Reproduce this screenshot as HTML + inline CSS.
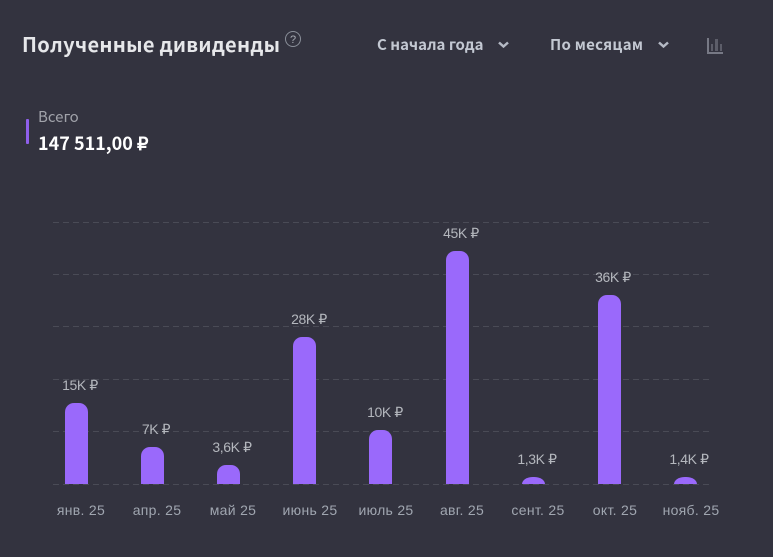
<!DOCTYPE html>
<html lang="ru">
<head>
<meta charset="utf-8">
<style>
html,body{margin:0;padding:0;width:773px;height:557px;overflow:hidden;background:#33333f;}
body{position:relative;font-family:"Liberation Sans",sans-serif;}
.n{position:absolute;font-family:"Noto Sans CJK JP","Liberation Sans",sans-serif;white-space:nowrap;line-height:1;}
.t{position:absolute;white-space:nowrap;font-size:14px;line-height:16px;color:#b4b7bd;transform:translateX(-50%);letter-spacing:-.4px;}
.x{color:#a0a6b0;letter-spacing:.3px;}
.b{position:absolute;width:23px;background:#9a69fb;border-radius:9px 9px 0 0;}
svg{position:absolute;left:0;top:0;}
</style>
</head>
<body>
<div class="n" style="left:22px;top:34px;font-size:20px;font-weight:700;color:#e6e7ea;letter-spacing:.3px">Полученные дивиденды</div>
<svg width="773" height="557">
<circle cx="293" cy="39" r="7.500" fill="none" stroke="#8a8f99" stroke-width="1"/>
<text x="293" y="43" font-size="11" fill="#a8acb4" text-anchor="middle" font-family="Liberation Sans">?</text>
<path d="M499 42.500l4.500 4 4.500-4M659 42.500l4.500 4 4.500-4" fill="none" stroke="#b4b9c4" stroke-width="2.500"/>
<path d="M708 38v15h15" fill="none" stroke="#777985" stroke-width="2"/>
<rect x="711" y="44" width="2" height="7" fill="#5c5d69"/>
<rect x="715" y="39" width="3" height="12" fill="#5c5d69"/>
<rect x="720" y="44" width="2" height="7" fill="#5c5d69"/>
<g stroke="#4a4b56" stroke-width="1" stroke-dasharray="6 4">
<path d="M53 222.500H709M53 274.500H709M53 326.500H709M53 379.500H709M53 431.500H709M53 484.500H709"/>
</g>
</svg>
<div class="n" style="left:377px;top:37px;font-size:15px;font-weight:700;color:#c3c8d2">С начала года</div>
<div class="n" style="left:550px;top:37px;font-size:15px;font-weight:700;color:#c3c8d2;letter-spacing:.25px">По месяцам</div>
<div style="position:absolute;left:26px;top:119px;width:3px;height:25px;background:#8f5fec;border-radius:1px"></div>
<div class="n" style="left:38px;top:109px;font-size:15px;color:#a1a3aa">Всего</div>
<div class="n" style="left:38px;top:134px;font-size:18px;font-weight:700;color:#fff">147 511,00 ₽</div>

<div class="b" style="left:65px;top:403px;height:81px"></div>
<div class="b" style="left:141px;top:447px;height:37px"></div>
<div class="b" style="left:217px;top:465px;height:19px"></div>
<div class="b" style="left:293px;top:337px;height:147px"></div>
<div class="b" style="left:369px;top:430px;height:54px"></div>
<div class="b" style="left:446px;top:251px;height:233px"></div>
<div class="b" style="left:522px;top:477px;height:7px;border-radius:11px 11px 0 0/7px 7px 0 0"></div>
<div class="b" style="left:598px;top:295px;height:189px"></div>
<div class="b" style="left:674px;top:477px;height:7px;border-radius:11px 11px 0 0/7px 7px 0 0"></div>

<div class="t" style="left:80px;top:377px">15K ₽</div>
<div class="t" style="left:156px;top:421px">7K ₽</div>
<div class="t" style="left:232px;top:439px">3,6K ₽</div>
<div class="t" style="left:309px;top:311px">28K ₽</div>
<div class="t" style="left:385px;top:404px">10K ₽</div>
<div class="t" style="left:461px;top:225px">45K ₽</div>
<div class="t" style="left:537px;top:451px">1,3K ₽</div>
<div class="t" style="left:613px;top:269px">36K ₽</div>
<div class="t" style="left:689px;top:451px">1,4K ₽</div>

<div class="t x" style="left:81px;top:502px">янв. 25</div>
<div class="t x" style="left:157px;top:502px">апр. 25</div>
<div class="t x" style="left:233px;top:502px">май 25</div>
<div class="t x" style="left:310px;top:502px">июнь 25</div>
<div class="t x" style="left:386px;top:502px">июль 25</div>
<div class="t x" style="left:462px;top:502px">авг. 25</div>
<div class="t x" style="left:538px;top:502px">сент. 25</div>
<div class="t x" style="left:615px;top:502px">окт. 25</div>
<div class="t x" style="left:691px;top:502px">нояб. 25</div>
</body>
</html>
